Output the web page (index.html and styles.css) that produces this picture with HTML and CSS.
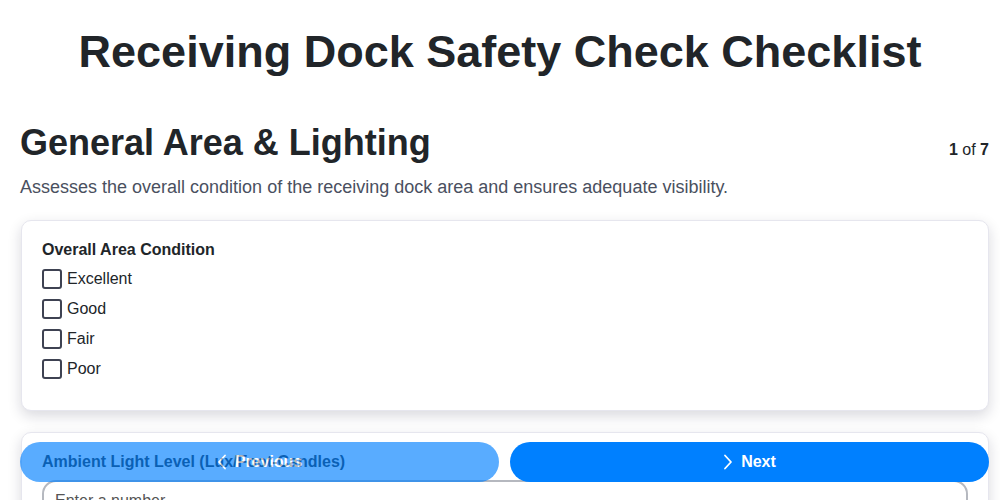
FILE: index.html
```html
<!DOCTYPE html>
<html lang="en">
<head>
<meta charset="utf-8">
<title>Receiving Dock Safety Check Checklist</title>
<link rel="stylesheet" href="styles.css">
</head>
<body>
<main class="page">
  <h1 class="title">Receiving Dock Safety Check Checklist</h1>
  <section class="section">
    <div class="section-head">
      <h2 class="section-title">General Area &amp; Lighting</h2>
      <div class="progress"><b>1</b> of <b>7</b></div>
    </div>
    <p class="section-desc">Assesses the overall condition of the receiving dock area and ensures adequate visibility.</p>
    <div class="card">
      <div class="field-label">Overall Area Condition</div>
      <label class="option"><span class="box"></span>Excellent</label>
      <label class="option"><span class="box"></span>Good</label>
      <label class="option"><span class="box"></span>Fair</label>
      <label class="option"><span class="box"></span>Poor</label>
    </div>
    <div class="card card-second">
      <div class="field-label">Ambient Light Level (Lux/Foot-Candles)</div>
      <div class="input">Enter a number</div>
    </div>
  </section>
</main>
<nav class="nav">
  <button class="btn btn-prev" disabled>
    <svg class="chev" viewBox="0 0 10 16" width="10" height="16"><path d="M8 1.5 L2 8 L8 14.5" fill="none" stroke="currentColor" stroke-width="1.8" stroke-linecap="round" stroke-linejoin="round"/></svg>
    Previous
  </button>
  <button class="btn btn-next">
    <svg class="chev" viewBox="0 0 10 16" width="10" height="16"><path d="M2 1.5 L8 8 L2 14.5" fill="none" stroke="currentColor" stroke-width="1.8" stroke-linecap="round" stroke-linejoin="round"/></svg>
    Next
  </button>
</nav>
</body>
</html>
```
FILE: styles.css
```css
html, body {
  margin: 0;
  padding: 0;
  background: #ffffff;
  overflow: hidden;
}
body {
  font-family: "Liberation Sans", Arial, sans-serif;
  color: #212529;
}
.title {
  margin: 0;
  padding-top: 25px;
  text-align: center;
  font-size: 45px;
  line-height: 54px;
  font-weight: 700;
  color: #212529;
}
.section {
  margin-top: 42px;
  padding: 0 11px 0 20px;
}
.section-head {
  display: flex;
  justify-content: space-between;
  align-items: baseline;
}
.section-title {
  margin: 0;
  font-size: 36px;
  line-height: 44px;
  font-weight: 700;
  color: #212529;
}
.progress {
  font-size: 16px;
  color: #212529;
}
.section-desc {
  margin: 11px 0 0;
  font-size: 18px;
  line-height: 22px;
  color: #4a5060;
}
.card {
  margin-top: 22px;
  margin-left: 1px;
  background: #fff;
  border: 1px solid #e6e6ee;
  border-radius: 10px;
  box-shadow: 0 5px 14px rgba(20, 20, 50, 0.16);
  padding: 19px 20px 26px;
}
.card-second {
  margin-top: 21px;
}
.field-label {
  font-size: 16px;
  line-height: 20px;
  font-weight: 700;
  margin-bottom: 4px;
}
.option {
  display: flex;
  align-items: center;
  gap: 5px;
  font-size: 16px;
  line-height: 30px;
  color: #212529;
}
.box {
  width: 16px;
  height: 16px;
  border: 2px solid #3e4252;
  border-radius: 3px;
  display: inline-block;
}
.input {
  margin-top: 8px;
  border: 2px solid #b5b8bf;
  border-radius: 14px;
  padding: 10px 11px;
  font-size: 16px;
  color: #555;
}
.nav {
  position: fixed;
  left: 20px;
  right: 11px;
  bottom: 18px;
  display: flex;
  gap: 11px;
}
.btn {
  flex: 1;
  height: 40px;
  border: none;
  border-radius: 20px;
  background: #0080ff;
  color: #fff;
  font-family: "Liberation Sans", Arial, sans-serif;
  font-size: 16px;
  font-weight: 700;
  display: flex;
  align-items: center;
  justify-content: center;
  gap: 8px;
  padding: 0;
}
.btn-prev {
  opacity: 0.65;
}
.chev {
  display: block;
}
```
